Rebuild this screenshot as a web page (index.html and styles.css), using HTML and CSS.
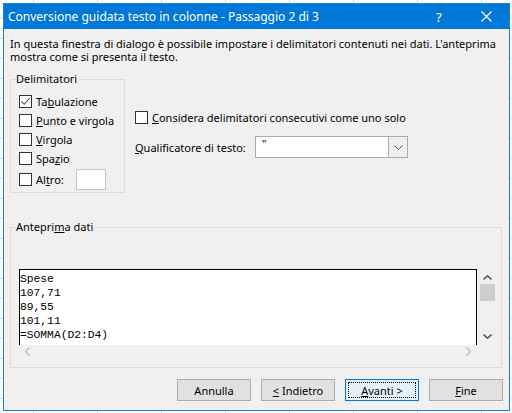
FILE: index.html
```html
<!DOCTYPE html>
<html>

<head>
    <link rel="stylesheet" href="styles.css">
</head>

<body>
    <div class="dialog">
        <div class="titlebar">
            <span class="title">Conversione guidata testo in colonne - Passaggio 2 di 3</span>
            <span class="help">?</span>
            <svg class="close" width="11" height="11" viewBox="0 0 11 11">
                <path d="M0.5 0.5 L10.5 10.5 M10.5 0.5 L0.5 10.5" stroke="#fff" stroke-width="1.1" fill="none" />
            </svg>
        </div>
        <div class="content">
            <p class="intro">In questa finestra di dialogo è possibile impostare i delimitatori contenuti nei dati. L'anteprima mostra come si presenta il testo.</p>

            <div class="options">
                <fieldset class="group delims">
                    <legend>Delimitatori</legend>
                    <label class="check first"><span class="box"><svg width="11" height="11" viewBox="0 0 11 11"><path d="M1.5 5.5 L4.2 8.3 L9.6 2.2" stroke="#555" stroke-width="1.1" fill="none" /></svg></span>Ta<u>b</u>ulazione</label>
                    <label class="check"><span class="box"></span><u>P</u>unto e virgola</label>
                    <label class="check"><span class="box"></span><u>V</u>irgola</label>
                    <label class="check"><span class="box"></span>Spa<u>z</u>io</label>
                    <label class="check altro"><span class="box"></span>Al<u>t</u>ro:<span class="field"></span></label>
                </fieldset>

                <div class="side">
                    <label class="check consec"><span class="box"></span><u>C</u>onsidera delimitatori consecutivi come uno solo</label>
                    <div class="qualifier">
                        <span class="qlabel"><u>Q</u>ualificatore di testo:</span>
                        <div class="combo">
                            <span class="value">"</span>
                            <span class="drop">
                                <svg width="9" height="5" viewBox="0 0 9 5"><path d="M0.5 0.5 L4.5 4.5 L8.5 0.5" stroke="#555" stroke-width="1" fill="none" /></svg>
                            </span>
                        </div>
                    </div>
                </div>
            </div>

            <fieldset class="group preview">
                <legend>Antepri<u>m</u>a dati</legend>
                <div class="preview-grid">
                    <pre class="data">Spese
107,71
89,55
101,11
=SOMMA(D2:D4)</pre>
                    <div class="vscroll">
                        <svg width="9" height="5" viewBox="0 0 9 5"><path d="M0.5 4.5 L4.5 0.8 L8.5 4.5" stroke="#606060" stroke-width="1.6" fill="none" /></svg>
                        <span class="thumb"></span>
                        <svg class="down" width="9" height="5" viewBox="0 0 9 5"><path d="M0.5 0.5 L4.5 4.2 L8.5 0.5" stroke="#606060" stroke-width="1.6" fill="none" /></svg>
                    </div>
                    <div class="hscroll">
                        <svg width="5" height="9" viewBox="0 0 5 9"><path d="M4.5 0.5 L0.8 4.5 L4.5 8.5" stroke="#c4c4c4" stroke-width="1.6" fill="none" /></svg>
                        <svg width="5" height="9" viewBox="0 0 5 9"><path d="M0.5 0.5 L4.2 4.5 L0.5 8.5" stroke="#c4c4c4" stroke-width="1.6" fill="none" /></svg>
                    </div>
                </div>
            </fieldset>

            <div class="buttons">
                <button class="btn">Annulla</button>
                <button class="btn"><u>&lt;</u> Indietro</button>
                <button class="btn default"><u>A</u>vanti &gt;</button>
                <button class="btn"><u>F</u>ine</button>
            </div>
        </div>
    </div>
</body>

</html>
```

FILE: styles.css
```css
html,
body {
    margin: 0;
    height: 100%;
}

body {
    background-color: #fff;
    background-image: linear-gradient(#d6d6d6 1px, transparent 1px), linear-gradient(90deg, #d6d6d6 1px, transparent 1px);
    background-size: 64px 20px;
    background-position: 33px 18px;
    font-family: 'Noto Sans', sans-serif;
    font-size: 11px;
    color: #000;
    overflow: hidden;
}

.dialog {
    margin: 3px 0 0 3px;
    width: 505px;
    height: 406px;
    border: 1px solid #1783d8;
    background-color: #f0f0f0;
}

.titlebar {
    height: 25px;
    background-color: #0078d7;
    color: #fff;
    display: flex;
    align-items: center;
    padding-left: 4px;
    font-size: 12px;
}

.title {
    flex: 1;
}

.help {
    width: 12px;
    margin-right: 33px;
    font-size: 13px;
}

.close {
    margin-right: 17px;
}

.content {
    padding: 8px 6px 0 6px;
}

.intro {
    margin: 0;
    line-height: 13px;
}

.options {
    display: flex;
    gap: 10px;
    margin-top: 9px;
}

.group {
    margin: 0;
    padding: 0 0 0 5px;
    border: 1px solid #dcdcdc;
    min-width: 0;
}

.group legend {
    padding: 0 2px 0 0;
    line-height: 14px;
}

.delims {
    width: 115px;
    padding-bottom: 1px;
    box-sizing: border-box;
}

.check {
    display: flex;
    align-items: center;
    height: 19px;
    margin-left: 3px;
}

.check.first {
    margin-top: 6px;
}

.check.altro {
    height: 23px;
}

.box {
    width: 11px;
    height: 11px;
    border: 1px solid #333;
    background-color: #fff;
    margin-right: 4px;
    flex: none;
}

.box svg {
    display: block;
}

.field {
    width: 28px;
    height: 19px;
    border: 1px solid #c4c4c4;
    background-color: #fff;
    margin-left: 12px;
}

.side {
    padding-top: 36px;
}

.consec {
    margin-left: 0;
}

.qualifier {
    display: flex;
    align-items: center;
    margin-top: 9px;
}

.qlabel {
    width: 120px;
}

.combo {
    display: flex;
    width: 151px;
    height: 20px;
    border: 1px solid #acacac;
    background-color: #fff;
}

.value {
    flex: 1;
    padding-left: 6px;
    line-height: 14px;
}

.drop {
    width: 18px;
    border-left: 1px solid #acacac;
    background-color: #f0f0f0;
    display: flex;
    align-items: center;
    justify-content: center;
}

.preview {
    margin-top: 27px;
    width: 492px;
    padding-bottom: 10px;
    box-sizing: border-box;
}

.preview-grid {
    display: grid;
    grid-template-columns: 458px 20px;
    grid-template-rows: 76px 12px;
    margin: 35px 0 0 3px;
}

.data {
    margin: 0;
    padding-top: 2px;
    border: 1px solid #000;
    border-bottom: none;
    background-color: #fff;
    font-family: 'Liberation Mono', monospace;
    font-size: 11.3px;
    line-height: 14px;
    overflow: hidden;
}

.vscroll {
    display: flex;
    flex-direction: column;
    align-items: center;
    padding-top: 6px;
}

.thumb {
    width: 15px;
    height: 17px;
    margin-top: 4px;
    background-color: #cdcdcd;
}

.vscroll .down {
    margin-top: auto;
    margin-bottom: 6px;
}

.hscroll {
    display: flex;
    justify-content: space-between;
    align-items: center;
    padding: 0 6px;
}

.buttons {
    display: flex;
    justify-content: flex-end;
    gap: 10px;
    margin-top: 11px;
}

.btn {
    width: 74px;
    height: 22px;
    padding: 0;
    border: 1px solid #adadad;
    background-color: #e1e1e1;
    font-family: 'Noto Sans', sans-serif;
    font-size: 11px;
    color: #000;
}

.btn.default {
    border-color: #0078d7;
    background-color: #e5f1fb;
    outline: 1px dotted #000;
    outline-offset: -4px;
}
```
